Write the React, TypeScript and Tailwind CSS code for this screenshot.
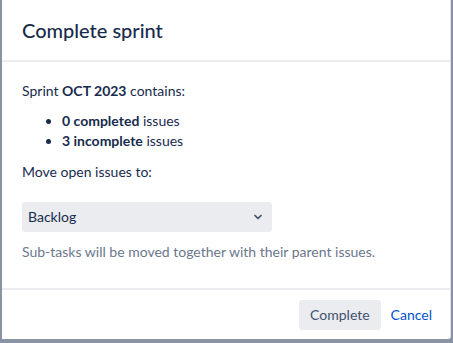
import { ChevronDown } from "lucide-react";

const font = { fontFamily: 'Lato, "Noto Sans", "Liberation Sans", sans-serif' };

export default function App() {
  return (
    <div className="h-[343px] w-[453px] overflow-hidden bg-[#8993a4]" style={font}>
      <div className="ml-[2px] flex h-[339px] w-[449px] flex-col rounded-br-[3px] border-r border-[#dfe1e6] bg-white text-[14px] leading-5 text-[#172b4d]">
        <div className="flex h-[60px] items-center px-5">
          <h1 className="text-[20px] font-medium text-[#172b4d]">Complete sprint</h1>
        </div>
        <div className="h-[2px] bg-[#ebecf0]" />

        <div className="flex-1 px-5 pt-[19px]">
          <p>
            Sprint <strong className="font-bold">OCT 2023</strong> contains:
          </p>
          <ul className="mt-[10px] list-disc pl-10">
            <li>
              <strong className="font-bold">0 completed</strong> issues
            </li>
            <li>
              <strong className="font-bold">3 incomplete</strong> issues
            </li>
          </ul>
          <p className="mt-[11px]">Move open issues to:</p>
          <div className="mt-5 flex h-[30px] w-[250px] items-center justify-between rounded-[3px] bg-[#ebecf0] pl-[6px] pr-[8px]">
            <span>Backlog</span>
            <ChevronDown size={12} strokeWidth={3.5} className="text-[#42526e]" />
          </div>
          <p className="mt-[10px] text-[#6b778c]">
            Sub-tasks will be moved together with their parent issues.
          </p>
        </div>

        <div className="h-[2px] bg-[#ebecf0]" />
        <div className="flex items-center justify-end gap-[10px] pb-[9px] pr-[18px] pt-[10px]">
          <button className="h-[30px] rounded-[3px] bg-[#ebecf0] px-[11px] text-[#42526e]">
            Complete
          </button>
          <button className="text-[#0052cc]">Cancel</button>
        </div>
      </div>
    </div>
  );
}
